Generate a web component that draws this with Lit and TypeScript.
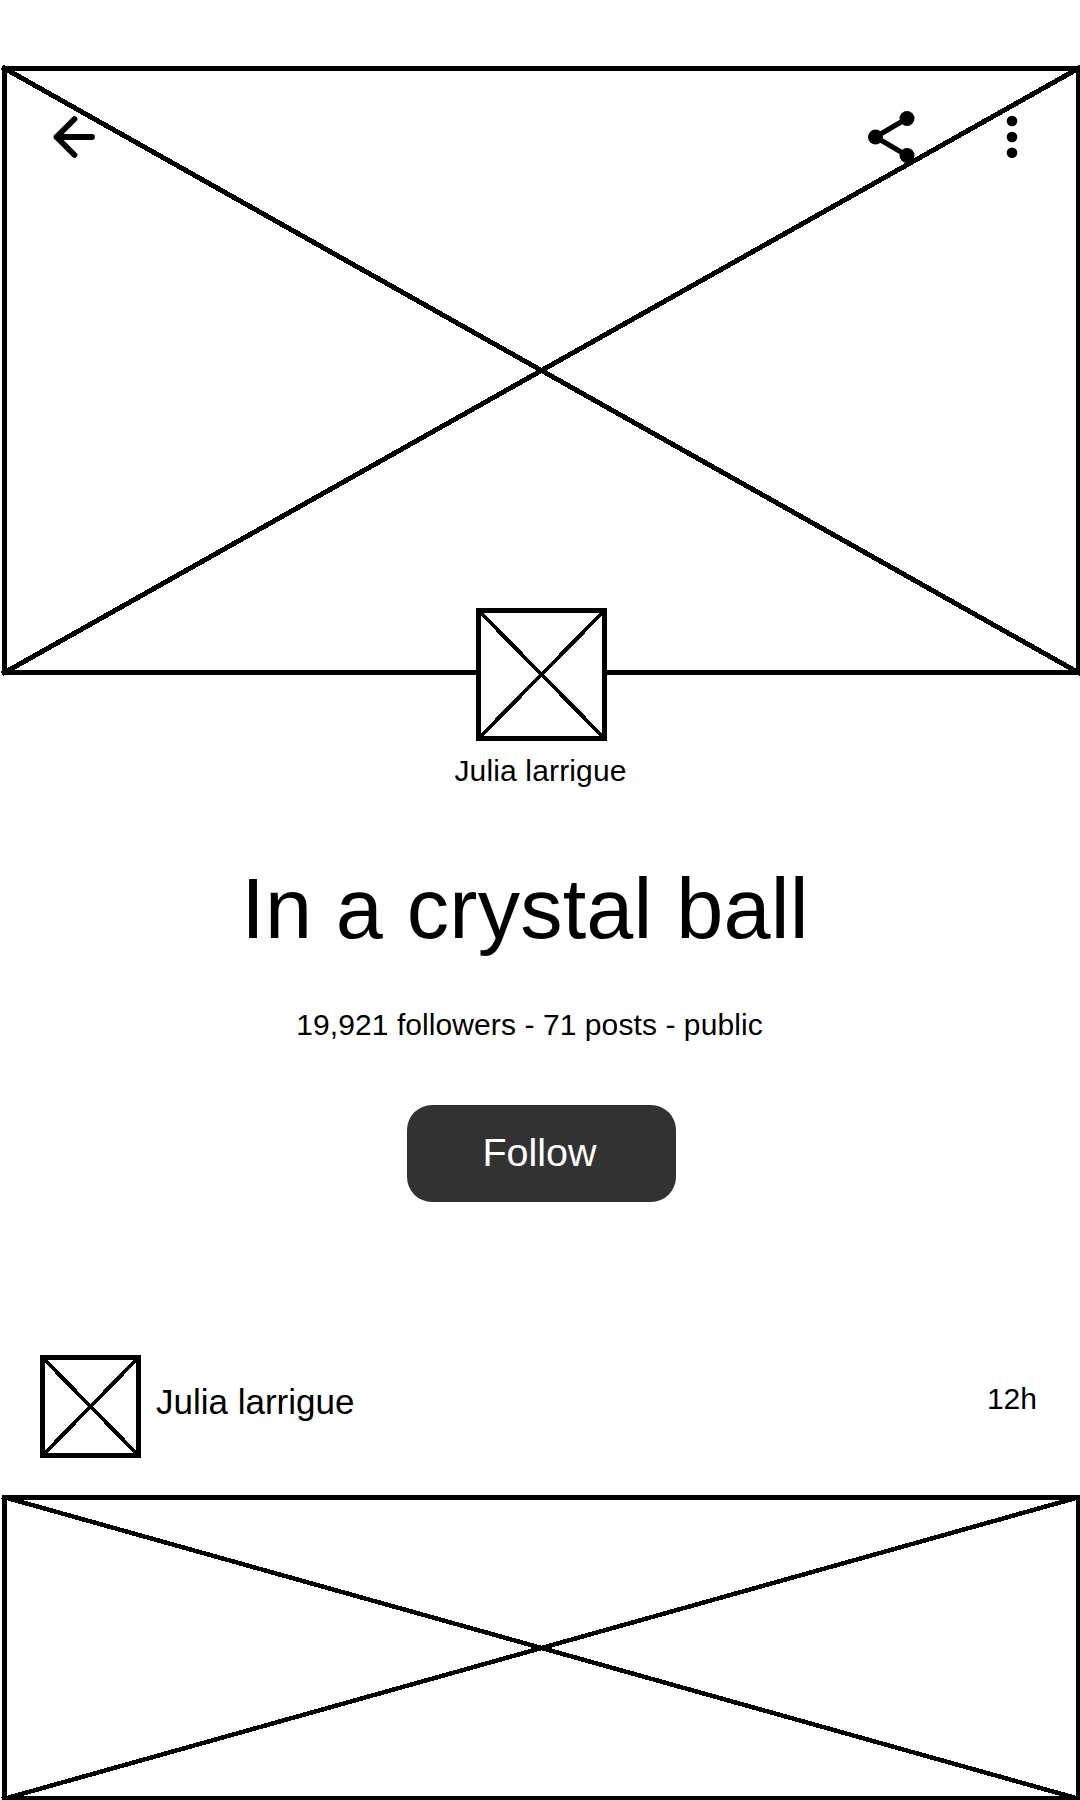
import { LitElement, html, css, svg } from "lit";
import { customElement, property } from "lit/decorators.js";

/** Crossed box that stands in for a picture. */
@customElement("image-placeholder")
class ImagePlaceholder extends LitElement {
  @property({ type: Number }) width = 100;
  @property({ type: Number }) height = 100;
  @property({ type: Number }) cross = 4;

  static styles = css`
    :host {
      display: block;
      flex: none;
      background: #fff;
    }
    .box {
      display: block;
      overflow: visible;
      fill: none;
      stroke: #000;
      shape-rendering: crispEdges;
    }
    .frame {
      stroke-width: 5;
    }
    .cross {
      stroke-linecap: square;
    }
  `;

  render() {
    const { width: w, height: h } = this;
    return html`<svg class="box" width=${w} height=${h} viewBox="0 0 ${w} ${h}">
      ${svg`<rect class="frame" x="2.5" y="2.5" width=${w - 5} height=${h - 5} />
      <path class="cross" stroke-width=${this.cross} d="M2.2 2.2L${w - 2.2} ${h - 2.2}M${w - 2.2} 2.2L2.2 ${h - 2.2}" />`}
    </svg>`;
  }
}

@customElement("app-root")
class AppRoot extends LitElement {
  static styles = css`
    :host {
      display: block;
      width: 1080px;
      height: 1800px;
      overflow: hidden;
      background: #fff;
      color: #000;
      font-family: "Liberation Sans", Arial, sans-serif;
    }
    .page {
      display: flex;
      flex-direction: column;
      padding: 66px 0 0 2px;
      width: 1079px;
    }
    .hero {
      position: relative;
    }
    .bar {
      position: absolute;
      inset: 44px 0 auto 0;
      display: flex;
      align-items: center;
      padding: 0 42px 0 46px;
    }
    .icon {
      display: block;
      width: 54px;
      height: 54px;
      fill: #000;
      stroke: none;
    }
    .line {
      fill: none;
      stroke: #000;
      stroke-width: 5.8;
      stroke-linecap: round;
      stroke-linejoin: round;
    }
    .share {
      margin-left: auto;
      margin-right: 67px;
    }
    .link {
      stroke-width: 5;
    }
    .profile {
      display: flex;
      flex-direction: column;
      align-items: center;
      position: relative;
      margin-top: -67px;
    }
    .author {
      margin: 12px 2px 0 0;
      font-size: 30px;
      line-height: 36px;
      letter-spacing: 0.15px;
    }
    .title {
      margin: 72px 33px 0 0;
      font-size: 84.6px;
      line-height: 96px;
      font-weight: 400;
      letter-spacing: 0.2px;
    }
    .stats {
      margin: 50px 24px 0 0;
      font-size: 30px;
      line-height: 36px;
      letter-spacing: 0.08px;
    }
    .follow {
      margin: 62px 0 0;
      width: 269px;
      height: 97px;
      padding: 0 4px 3px 0;
      border: 0;
      border-radius: 25px;
      background: #323232;
      color: #fff;
      font: 39.5px/46px "Liberation Sans", Arial, sans-serif;
    }
    .post {
      display: flex;
      align-items: center;
      margin-top: 153px;
      padding: 0 44px 0 38px;
      height: 103px;
    }
    .name {
      margin: 0 auto 9px 15px;
      font-size: 35px;
      line-height: 40px;
    }
    .time {
      margin-bottom: 16px;
      font-size: 30px;
      line-height: 36px;
    }
    .picture {
      margin-top: 37px;
    }
  `;

  render() {
    return html`<main class="page">
      <section class="hero">
        <image-placeholder width="1079" height="609" cross="5"></image-placeholder>
        <nav class="bar">
          <svg class="icon" viewBox="0 0 54 54" aria-label="Back">
            <path class="line" d="M26.5 9L8.5 27L26.5 45M8.5 27H44" />
          </svg>
          <svg class="icon share" viewBox="0 0 54 54" aria-label="Share">
            <path class="line link" d="M43 8.5L11.5 27L43 45.5" />
            <circle cx="11.5" cy="27" r="7.5" />
            <circle cx="43" cy="8.5" r="7.5" />
            <circle cx="43" cy="45.5" r="7.5" />
          </svg>
          <svg class="icon" viewBox="0 0 54 54" aria-label="More">
            <circle cx="27" cy="11" r="5.3" />
            <circle cx="27" cy="27" r="5.3" />
            <circle cx="27" cy="42.7" r="5.3" />
          </svg>
        </nav>
      </section>
      <section class="profile">
        <image-placeholder width="131" height="133" cross="3.8"></image-placeholder>
        <p class="author">Julia larrigue</p>
        <h1 class="title">In a crystal ball</h1>
        <p class="stats">19,921 followers - 71 posts - public</p>
        <button class="follow">Follow</button>
      </section>
      <article>
        <header class="post">
          <image-placeholder width="101" height="103" cross="3.8"></image-placeholder>
          <span class="name">Julia larrigue</span>
          <time class="time">12h</time>
        </header>
        <image-placeholder class="picture" width="1079" height="306" cross="4.5"></image-placeholder>
      </article>
    </main>`;
  }
}
